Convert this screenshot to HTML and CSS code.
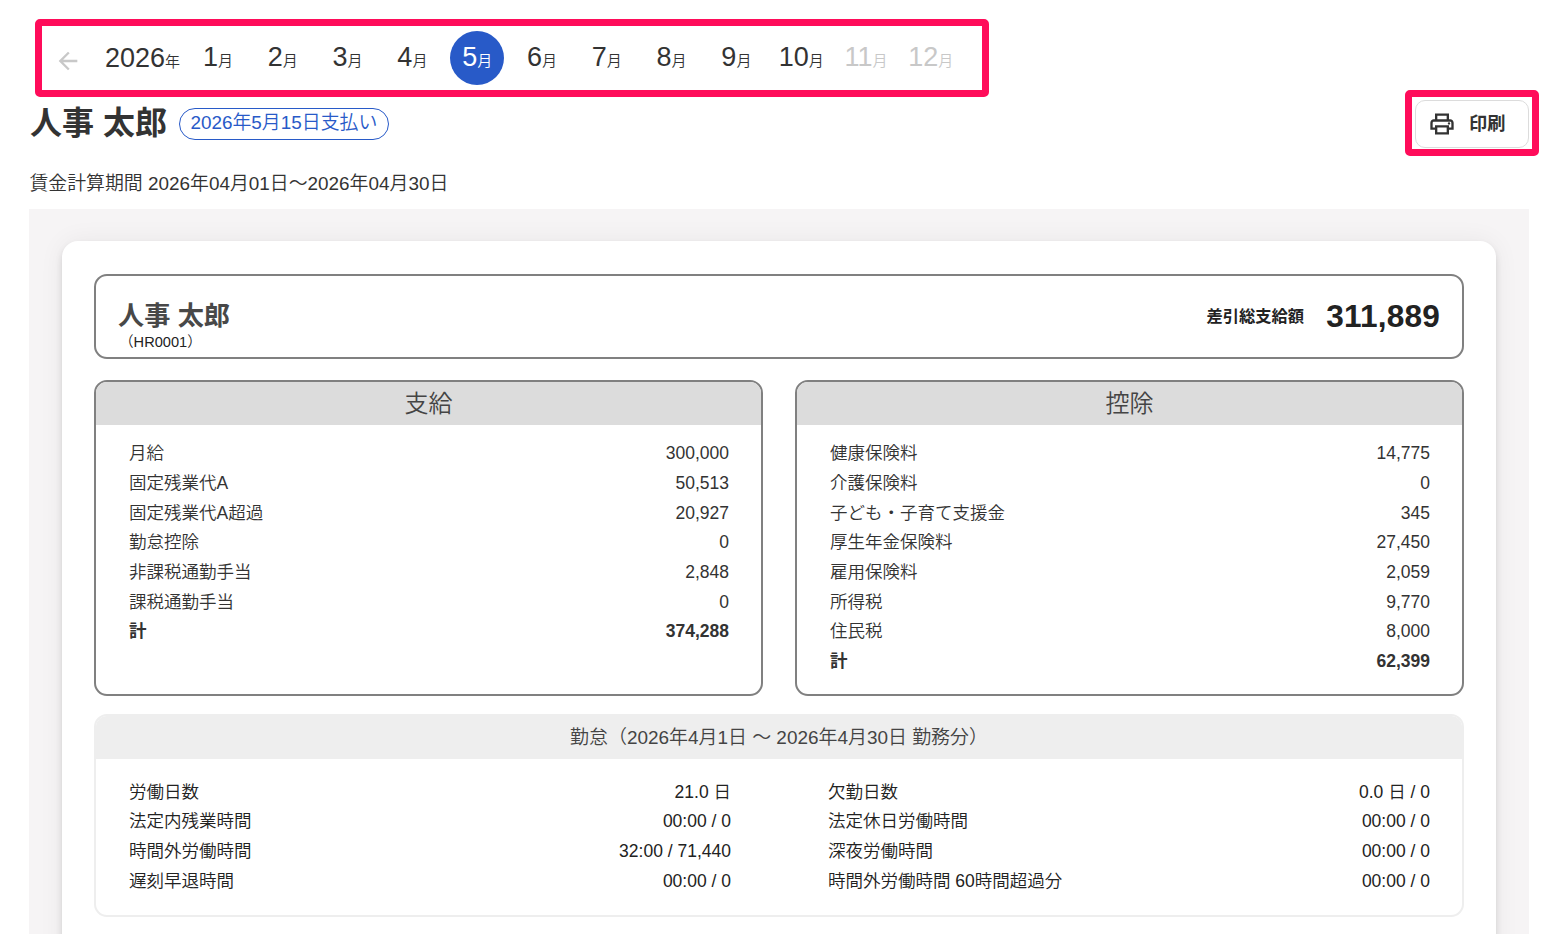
FILE: index.html
```html
<!DOCTYPE html>
<html lang="ja">
<head>
<meta charset="utf-8">
<title>給与明細</title>
<link rel="stylesheet" href="styles.css">
</head>
<body>
<div class="page">
  <nav class="months">
    <svg class="back" viewBox="0 0 24 24" width="28" height="28"><path d="M20 11H7.83l5.59-5.59L12 4l-8 8 8 8 1.41-1.41L7.83 13H20z"/></svg>
    <span class="year">2026<small>年</small></span>
    <ul class="month-list">
      <li>1<small>月</small></li>
      <li>2<small>月</small></li>
      <li>3<small>月</small></li>
      <li>4<small>月</small></li>
      <li class="current">5<small>月</small></li>
      <li>6<small>月</small></li>
      <li>7<small>月</small></li>
      <li>8<small>月</small></li>
      <li>9<small>月</small></li>
      <li>10<small>月</small></li>
      <li class="disabled">11<small>月</small></li>
      <li class="disabled">12<small>月</small></li>
    </ul>
    <i class="marker marker-months"></i>
  </nav>

  <header class="head">
    <h1 class="title">人事 太郎</h1>
    <span class="pill">2026年5月15日支払い</span>
    <button class="print">
      <svg viewBox="0 0 24 24" width="28" height="28"><path d="M19 8h-1V3H6v5H5c-1.660 0-3 1.340-3 3v6h4v4h12v-4h4v-6c0-1.660-1.340-3-3-3zM8 5h8v3H8V5zm8 14H8v-4h8v4zm2-4v-2H6v2H4v-4c0-.550.450-1 1-1h14c.550 0 1 .450 1 1v4h-2z"/><circle cx="18" cy="11.500" r="1"/></svg>
      <span>印刷</span>
      <i class="marker marker-print"></i>
    </button>
  </header>
  <p class="period">賃金計算期間 2026年04月01日〜2026年04月30日</p>

  <main class="stage">
    <article class="sheet">
      <section class="summary">
        <div>
          <h2 class="name">人事 太郎</h2>
          <p class="code">（HR0001）</p>
        </div>
        <p class="net"><span class="net-label">差引総支給額</span><strong class="net-value">311,889</strong></p>
      </section>

      <div class="columns">
        <section class="panel">
          <h3 class="panel-title">支給</h3>
          <dl class="rows">
            <div class="row"><dt>月給</dt><dd>300,000</dd></div>
            <div class="row"><dt>固定残業代A</dt><dd>50,513</dd></div>
            <div class="row"><dt>固定残業代A超過</dt><dd>20,927</dd></div>
            <div class="row"><dt>勤怠控除</dt><dd>0</dd></div>
            <div class="row"><dt>非課税通勤手当</dt><dd>2,848</dd></div>
            <div class="row"><dt>課税通勤手当</dt><dd>0</dd></div>
            <div class="row total"><dt>計</dt><dd>374,288</dd></div>
          </dl>
        </section>
        <section class="panel">
          <h3 class="panel-title">控除</h3>
          <dl class="rows">
            <div class="row"><dt>健康保険料</dt><dd>14,775</dd></div>
            <div class="row"><dt>介護保険料</dt><dd>0</dd></div>
            <div class="row"><dt>子ども・子育て支援金</dt><dd>345</dd></div>
            <div class="row"><dt>厚生年金保険料</dt><dd>27,450</dd></div>
            <div class="row"><dt>雇用保険料</dt><dd>2,059</dd></div>
            <div class="row"><dt>所得税</dt><dd>9,770</dd></div>
            <div class="row"><dt>住民税</dt><dd>8,000</dd></div>
            <div class="row total"><dt>計</dt><dd>62,399</dd></div>
          </dl>
        </section>
      </div>

      <section class="attendance">
        <h3 class="attendance-title">勤怠（2026年4月1日 〜 2026年4月30日 勤務分）</h3>
        <div class="attendance-body">
          <dl class="att-rows">
            <div class="row"><dt>労働日数</dt><dd>21.0 日</dd></div>
            <div class="row"><dt>法定内残業時間</dt><dd>00:00 / 0</dd></div>
            <div class="row"><dt>時間外労働時間</dt><dd>32:00 / 71,440</dd></div>
            <div class="row"><dt>遅刻早退時間</dt><dd>00:00 / 0</dd></div>
          </dl>
          <dl class="att-rows">
            <div class="row"><dt>欠勤日数</dt><dd>0.0 日 / 0</dd></div>
            <div class="row"><dt>法定休日労働時間</dt><dd>00:00 / 0</dd></div>
            <div class="row"><dt>深夜労働時間</dt><dd>00:00 / 0</dd></div>
            <div class="row"><dt>時間外労働時間 60時間超過分</dt><dd>00:00 / 0</dd></div>
          </dl>
        </div>
      </section>
    </article>
  </main>
</div>
</body>
</html>
```
FILE: styles.css
```css
* { box-sizing: border-box; margin: 0; padding: 0; }
html, body { height: 100%; overflow: hidden; }
body {
  background: #fff;
  color: #333;
  font-family: "Liberation Sans", "Noto Sans CJK JP", sans-serif;
  font-weight: 350;
}
.page { height: 934px; padding: 31px 28px 0 29px; overflow: hidden; display: flex; flex-direction: column; }
.marker { position: absolute; border: 7px solid #ff0c5a; border-radius: 5px; pointer-events: none; }

/* month navigation */
.months { position: relative; display: flex; align-items: center; height: 54px; padding-left: 25px; flex: none; font-size: 27px; }
.months small { font-size: 15px; line-height: 1; }
.marker-months { left: 6px; top: -12px; width: 954px; height: 78px; }
.back { fill: #c8c8c8; margin-top: 6px; }
.year { width: 76px; margin-left: 23px; line-height: 53px; white-space: nowrap; }
.month-list { list-style: none; display: flex; gap: 10.8px; margin-left: 9.500px; }
.month-list li { width: 54px; height: 54px; line-height: 53px; padding-left: 1px; text-align: center; border-radius: 50%; white-space: nowrap; }
.month-list .current { background: #285ac8; color: #fff; }
.month-list .disabled { color: #c8c8c8; }

/* heading */
.head { display: flex; align-items: center; height: 78px; flex: none; }
.title { font-size: 32px; line-height: 44px; padding: 0 0 2px 1px; font-weight: 700; }
.pill { margin-left: 12px; height: 32px; width: 210px; line-height: 28px; text-align: center; font-size: 18.900px; color: #285ac8; border: 1px solid #285ac8; border-radius: 16px; }
.print {
  position: relative; margin-left: auto; width: 114px; height: 48px;
  display: flex; align-items: center; gap: 13px; padding-left: 12px;
  background: #fff; border: 1px solid #dcdcdc; border-radius: 10px;
  font: 700 18.200px "Liberation Sans", "Noto Sans CJK JP", sans-serif; color: #333; fill: #333;
}
.print span { padding-bottom: 4px; }
.marker-print { left: -11px; top: -11px; width: 134px; height: 66px; }
.period { font-size: 18.900px; line-height: 28px; height: 46px; padding: 7px 0 0 .4px; flex: none; }

/* payslip */
.stage { flex: 1 0 auto; background: #f6f4f5; padding: 32px 33px 0; }
.sheet {
  height: 760px; padding: 33px 32px; background: #fff; border-radius: 16px;
  box-shadow: 0 4px 8px -2px rgba(0,0,0,.2), 0 0 26px rgba(0,0,0,.06);
  color: #333;
}
.summary { height: 85px; display: flex; justify-content: space-between; border: 2px solid #808080; border-radius: 13px; padding: 19px 22px 0 22px; }
.name { font-size: 26.200px; line-height: 42px; font-weight: 700; color: #484848; }
.code { padding-left: 1px; font-size: 14.600px; line-height: 10px; color: #222; }
.net { display: flex; align-items: center; height: 42px; gap: 22px; font-weight: 700; color: #222; }
.net-label { font-size: 16.300px; padding-bottom: 3px; }
.net-value { font-size: 31.600px; letter-spacing: .2px; }
.columns { display: grid; grid-template-columns: 1fr 1fr; gap: 32px; margin-top: 21px; }
.panel { height: 316px; border: 2px solid #808080; border-radius: 13px; overflow: hidden; }
.panel-title { height: 43px; line-height: 43px; background: #dcdcdc; text-align: center; font-size: 24px; font-weight: 350; color: #444; }
.rows { padding: 14.400px 32px 0 33px; }
.row { display: flex; justify-content: space-between; font-size: 17.500px; line-height: 29.670px; white-space: nowrap; }
.total { font-weight: 700; }
.attendance { margin-top: 18px; height: 203px; border: 2px solid #eee; border-radius: 13px; overflow: hidden; }
.attendance-title { height: 43px; line-height: 43px; background: #eee; text-align: center; font-size: 18.950px; font-weight: 350; color: #444; }
.attendance-body { display: grid; grid-template-columns: 602px 602px; justify-content: space-between; padding: 18.800px 32px 0 33px; color: #222; }
```
